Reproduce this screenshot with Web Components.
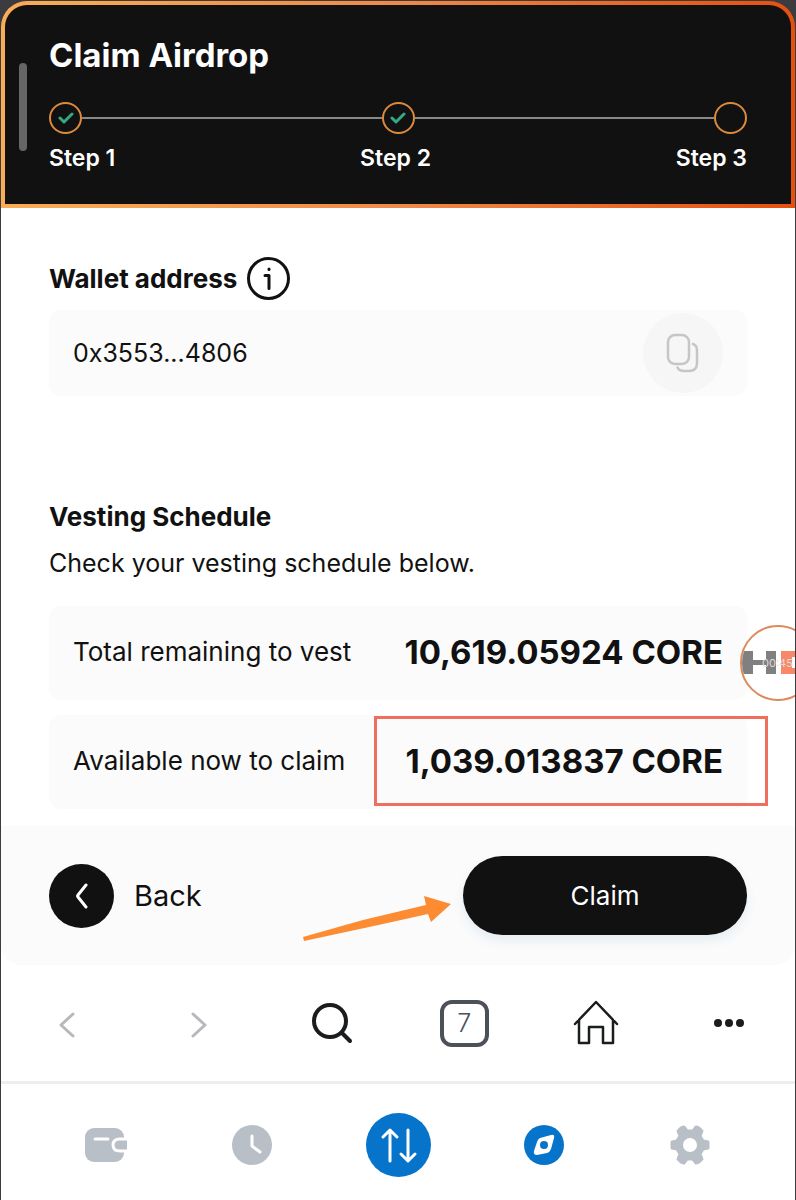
<!DOCTYPE html>
<html lang="en">
<head>
<meta charset="utf-8">
<meta name="viewport" content="width=device-width, initial-scale=1">
<title>Claim Airdrop</title>
<style>
  body {
    margin: 0;
    background: #3b3b40;
    color: #111;
    font-family: Inter, "Open Sans", sans-serif;
    font-size: 25px;
  }
</style>
</head>
<body>
<airdrop-app></airdrop-app>

<script>
const base = `
  *, :host::after { box-sizing: border-box; margin: 0; }
  svg { display: block; fill: none; stroke: currentColor; stroke-linecap: round; stroke-linejoin: round; }
  svg.solid { fill: currentColor; stroke: none; }
  button { border: 0; padding: 0; background: none; color: inherit; font: inherit; cursor: pointer; }
`;

class StepHeader extends HTMLElement {
  constructor() {
    super();
    this.attachShadow({ mode: "open" });
    const total = 3;
    const done = Number(this.getAttribute("done")) || 0;
    let dots = "";
    let labels = "";
    for (let i = 1; i <= total; i++) {
      if (i > 1) dots += `<span class="line"></span>`;
      const check = i <= done ? `<svg width="16" height="12" viewBox="0 0 16 12"><path d="M2 6l4 4 8-8"/></svg>` : "";
      dots += `<span class="dot">${check}</span>`;
      labels += `<li>Step ${i}</li>`;
    }
    this.shadowRoot.innerHTML = `
      <style>
        ${base}
        :host {
          display: block;
          padding: 4px;
          border-radius: 26px 26px 0 0;
          background: linear-gradient(90deg, #f9ad55, #ee8a48 50%, #e5500f);
          color: #fff;
        }
        .inner {
          position: relative;
          padding: 32px 44px 30px;
          border-radius: 22px 22px 0 0;
          background: #111;
        }
        .scroll {
          position: absolute;
          left: 14px;
          top: 58px;
          width: 8px;
          height: 88px;
          border-radius: 4px;
          background: #666;
        }
        h1 { font-size: 33px; line-height: 36px; font-weight: 700; }
        .dots { display: flex; align-items: center; margin-top: 29px; }
        .dot {
          display: grid;
          place-items: center;
          width: 33px;
          height: 32px;
          border: 2px solid #dd8a3c;
          border-radius: 50%;
          color: #35a884;
        }
        .dot svg { stroke-width: 3; }
        .line { flex: 1; height: 2px; background: #8b8888; }
        ol {
          display: flex;
          justify-content: space-between;
          margin-top: 8px;
          padding: 0;
          list-style: none;
          font-size: 23px;
          line-height: 32px;
          font-weight: 600;
        }
      </style>
      <div class="inner">
        <span class="scroll"></span>
        <h1><slot></slot></h1>
        <div class="dots">${dots}</div>
        <ol>${labels}</ol>
      </div>
    `;
  }
}

class WalletAddress extends HTMLElement {
  constructor() {
    super();
    this.attachShadow({ mode: "open" });
    this.shadowRoot.innerHTML = `
      <style>
        ${base}
        :host { display: block; }
        .head { display: flex; align-items: center; gap: 10px; }
        h2 { font-size: 26px; line-height: 32px; font-weight: 700; }
        .box {
          display: flex;
          align-items: center;
          justify-content: space-between;
          margin-top: 10px;
          padding: 3px 24px;
          border-radius: 12px;
          background: #fbfbfb;
        }
        .copy {
          display: grid;
          place-items: center;
          width: 80px;
          height: 80px;
          border-radius: 50%;
          background: #f6f6f6;
          color: #c4c6c7;
        }
      </style>
      <div class="head">
        <h2>Wallet address</h2>
        <button aria-label="Info">
          <svg width="43" height="43" viewBox="0 0 43 43" stroke-width="3"><circle cx="21.5" cy="21.5" r="20"/><path d="M18 18.500h4v13"/><path d="M22 12v.5"/></svg>
        </button>
      </div>
      <div class="box">
        <span><slot></slot></span>
        <button class="copy" aria-label="Copy">
          <svg width="34" height="40" viewBox="0 0 34 40" stroke-width="2.5"><rect x="2" y="2" width="21" height="29" rx="7"/><path d="M27 11q4 1.500 4 6v13q0 8-8 8h-5q-5 0-6.500-3.500"/></svg>
        </button>
      </div>
    `;
  }
}

class VestingRow extends HTMLElement {
  constructor() {
    super();
    this.attachShadow({ mode: "open" });
    this.shadowRoot.innerHTML = `
      <style>
        ${base}
        :host {
          position: relative;
          box-sizing: border-box;
          display: flex;
          align-items: center;
          justify-content: space-between;
          min-height: 94px;
          padding: 0 24px 3px;
          border-radius: 12px;
          background: #fbfbfb;
          font-size: 26px;
        }
        strong { font-size: 33px; font-weight: 700; white-space: nowrap; }
        :host([marked])::after {
          content: "";
          position: absolute;
          right: -21px;
          top: 1px;
          width: 394px;
          height: 90px;
          border: 3px solid #ee6f5e;
        }
      </style>
      <span><slot></slot></span>
      <strong>${this.getAttribute("amount")}</strong>
    `;
  }
}

class RecordBadge extends HTMLElement {
  constructor() {
    super();
    this.attachShadow({ mode: "open" });
    this.shadowRoot.innerHTML = `
      <style>
        ${base}
        :host { display: block; width: 55px; height: 76px; overflow: hidden; }
        .ring {
          display: grid;
          width: 76px;
          height: 76px;
          border: 2px solid #dd8b5c;
          border-radius: 50%;
          background: #fff;
          overflow: hidden;
        }
        svg, span { grid-area: 1 / 1; }
        span { align-self: center; padding-left: 20px; color: #ddd; font-size: 11px; }
      </style>
      <div class="ring">
        <svg class="solid" width="72" height="72" viewBox="0 0 72 72">
          <path fill="#808080" d="M0 24h11v9h13v-9h10v23H24v-9H11v9H0z"/>
          <path fill="#f9886b" d="M39 24h33v23H39z"/>
          <path fill="#fff" d="M50 30h3v11h-3z"/>
        </svg>
        <span><slot></slot></span>
      </div>
    `;
  }
}

class ClaimActions extends HTMLElement {
  constructor() {
    super();
    this.attachShadow({ mode: "open" });
    this.shadowRoot.innerHTML = `
      <style>
        ${base}
        :host {
          position: relative;
          display: flex;
          align-items: center;
          justify-content: space-between;
          padding: 30px 48px;
          border-radius: 0 0 20px 20px;
          background: #fbfbfb;
        }
        .back { display: flex; align-items: center; gap: 20px; font-size: 29px; line-height: 60px; }
        .back span {
          display: grid;
          place-items: center;
          width: 65px;
          height: 64px;
          border-radius: 50%;
          background: #111;
          color: #fff;
        }
        .claim {
          width: 284px;
          height: 79px;
          border-radius: 40px;
          background: #111;
          color: #fff;
          font-size: 26px;
          box-shadow: 0 6px 12px #e6edf2;
        }
        .arrow { position: absolute; right: 344px; top: 70px; color: #fd8b32; }
      </style>
      <button class="back">
        <span><svg width="16" height="26" viewBox="0 0 16 26" stroke-width="3"><path d="M12 2L4 12q-1 1 0 2L12 24"/></svg></span>
        Back
      </button>
      <svg class="arrow solid" width="148" height="46" viewBox="0 0 148 46"><path d="M0 41L60 24 123 9l-2-9 27 8-20 18-3-8-45 10L1 45z"/></svg>
      <button class="claim">Claim</button>
    `;
  }
}

class BrowserBar extends HTMLElement {
  constructor() {
    super();
    this.attachShadow({ mode: "open" });
    this.shadowRoot.innerHTML = `
      <style>
        ${base}
        :host {
          box-sizing: border-box;
          display: grid;
          grid-template-columns: repeat(6, 1fr);
          align-items: center;
          height: 119px;
          border-bottom: 3px solid #eee;
          color: #1b1c1e;
        }
        button { display: grid; place-items: center; height: 100%; }
        .off { padding-top: 4px; color: #b5b8bc; }
        .count {
          display: grid;
          place-items: center;
          width: 49px;
          height: 47px;
          border: 4px solid #4b5157;
          border-radius: 12px;
          color: #4b5157;
          font-weight: 300;
        }
      </style>
      <button class="off" aria-label="Previous page"><svg width="18" height="28" viewBox="0 0 18 28" stroke-width="3"><path d="M15 3L3 14l12 11"/></svg></button>
      <button class="off" aria-label="Next page"><svg width="18" height="28" viewBox="0 0 18 28" stroke-width="3"><path d="M3 3l12 11L3 25"/></svg></button>
      <button aria-label="Search"><svg width="42" height="42" viewBox="0 0 42 42" stroke-width="4"><circle cx="19" cy="19" r="16"/><path d="M31 31l8 8"/></svg></button>
      <button aria-label="Tabs"><span class="count">7</span></button>
      <button aria-label="Home"><svg width="46" height="46" viewBox="0 0 46 46" stroke-width="2.5"><path d="M2 24L23 2l21 22M6 20v23h10V27h14v16h10V20"/></svg></button>
      <button aria-label="More"><svg class="solid" width="32" height="10" viewBox="0 0 32 10"><circle cx="5" cy="5" r="4"/><circle cx="16" cy="5" r="4"/><circle cx="27" cy="5" r="4"/></svg></button>
    `;
  }
}

class WalletTabs extends HTMLElement {
  constructor() {
    super();
    this.attachShadow({ mode: "open" });
    this.shadowRoot.innerHTML = `
      <style>
        ${base}
        :host {
          box-sizing: border-box;
          display: grid;
          grid-template-columns: repeat(5, 1fr);
          align-items: center;
          height: 116px;
          padding: 5px 32px 0;
          color: #fff;
        }
        button { display: grid; place-items: center; height: 100%; }
        .gray { fill: #b9bfc7; stroke: none; }
        .blue { fill: #0674ca; stroke: none; }
      </style>
      <button aria-label="Wallet"><svg width="42" height="34" viewBox="0 0 42 34" stroke-width="3"><rect class="gray" x="0" y="0" width="39" height="34" rx="9"/><path d="M10 11h13"/><path fill="#b9bfc7" d="M43 11h-8q-7 0-7 6t7 6h8"/></svg></button>
      <button aria-label="History"><svg width="40" height="40" viewBox="0 0 40 40" stroke-width="3"><circle class="gray" cx="20" cy="20" r="20"/><path d="M20 11v10l8 6"/></svg></button>
      <button aria-label="Swap"><svg width="65" height="64" viewBox="0 0 65 64" stroke-width="3"><ellipse class="blue" cx="32.5" cy="32" rx="32.5" ry="32"/><path d="M24 48V17M17 24l7-7 7 7M42 17v31M35 41l7 7 7-7"/></svg></button>
      <button aria-label="Discover"><svg class="solid" width="40" height="40" viewBox="0 0 40 40"><circle class="blue" cx="20" cy="20" r="20"/><path d="M16 13l11-3q4-1 3 3l-3 11q-1 3-4 4l-10 2q-4 0-3-4l3-9q1-3 3-4z"/><circle class="blue" cx="20" cy="20" r="4"/></svg></button>
      <button aria-label="Settings"><svg class="solid" width="42" height="40" viewBox="0 0 42 40"><path fill="#b9bfc7" stroke="#b9bfc7" stroke-width="3" d="M12 3l3-1 3 4h6l3-4 3 1 3 3-2 5 3 5 5 1v6l-5 1-3 5 2 5-3 3-3 1-3-4h-6l-3 4-3-1-3-3 2-5-3-5-5-1v-6l5-1 3-5-2-5z"/><circle cx="21" cy="20" r="7"/></svg></button>
    `;
  }
}

class AirdropApp extends HTMLElement {
  constructor() {
    super();
    this.attachShadow({ mode: "open" });
    this.shadowRoot.innerHTML = `
      <style>
        ${base}
        :host { display: block; padding: 1px 1px 0; }
        .screen { background: #fff; }
        .top { background: #3b3b40; }
        main { padding: 49px 48px 17px; }
        .vesting { position: relative; margin-top: 105px; }
        h2 { font-size: 26px; line-height: 32px; font-weight: 700; }
        p { margin-top: 14px; line-height: 32px; }
        .rows { display: grid; gap: 15px; margin-top: 27px; }
        record-badge { position: absolute; right: -48px; top: 124px; }
      </style>
      <div class="screen">
        <div class="top"><step-header done="2">Claim Airdrop</step-header></div>
        <main>
          <wallet-address>0x3553...4806</wallet-address>
          <section class="vesting">
            <h2>Vesting Schedule</h2>
            <p>Check your vesting schedule below.</p>
            <div class="rows">
              <vesting-row amount="10,619.05924 CORE">Total remaining to vest</vesting-row>
              <vesting-row amount="1,039.013837 CORE" marked>Available now to claim</vesting-row>
            </div>
            <record-badge>00:45</record-badge>
          </section>
        </main>
        <claim-actions></claim-actions>
        <browser-bar></browser-bar>
        <wallet-tabs></wallet-tabs>
      </div>
    `;
  }
}

customElements.define("step-header", StepHeader);
customElements.define("wallet-address", WalletAddress);
customElements.define("vesting-row", VestingRow);
customElements.define("record-badge", RecordBadge);
customElements.define("claim-actions", ClaimActions);
customElements.define("browser-bar", BrowserBar);
customElements.define("wallet-tabs", WalletTabs);
customElements.define("airdrop-app", AirdropApp);
</script>
</body>
</html>
